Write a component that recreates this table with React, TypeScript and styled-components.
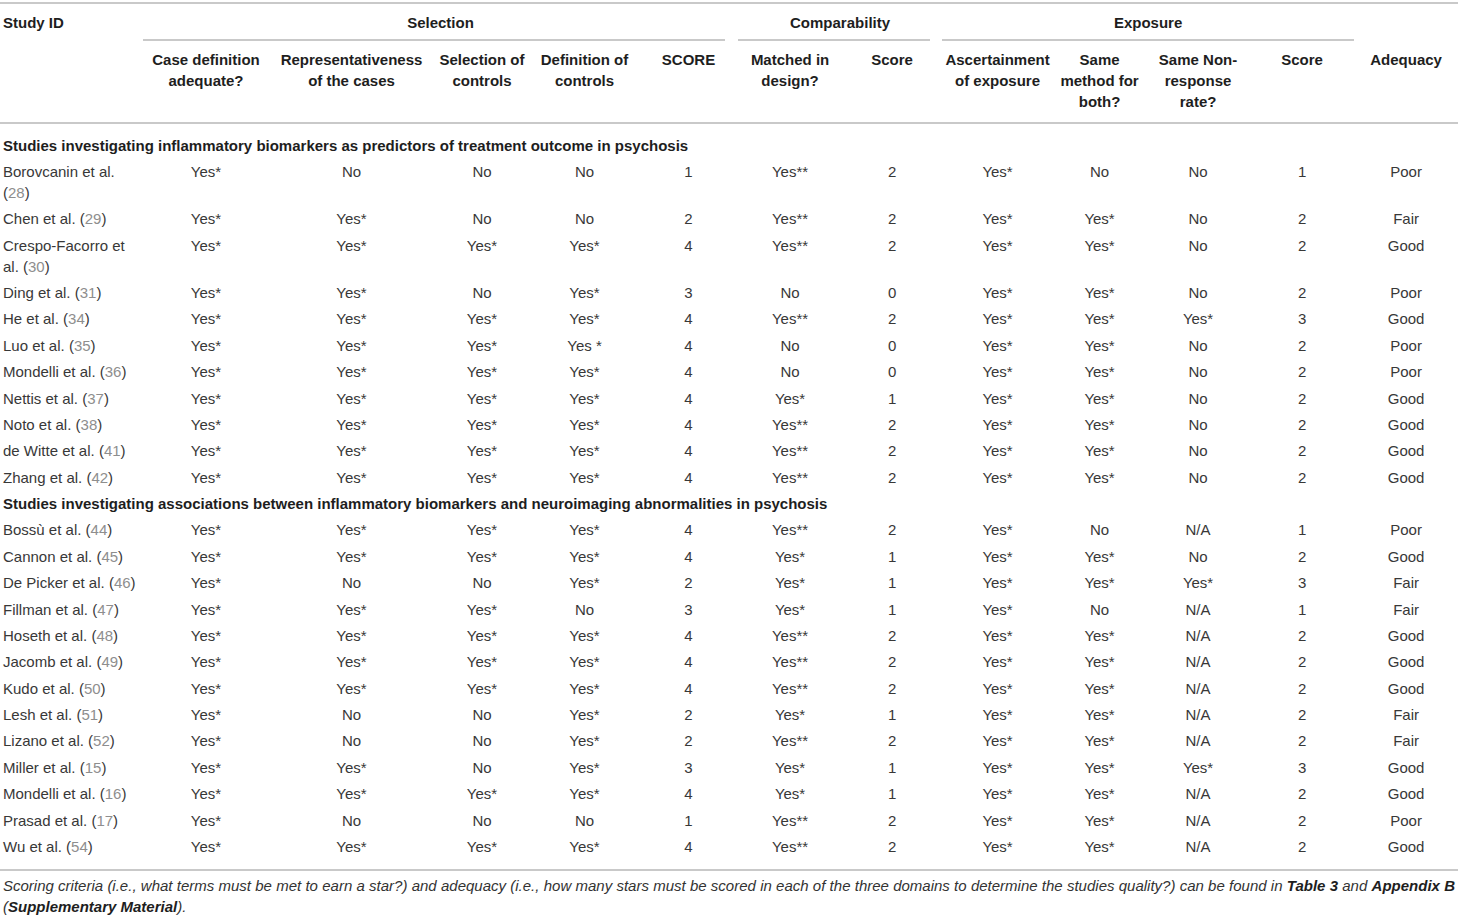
import React from "react";
import styled, { createGlobalStyle } from "styled-components";

const GlobalStyle = createGlobalStyle`
  html, body { margin: 0; padding: 0; background: #ffffff; }
  body { font-family: "Liberation Sans", Arial, Helvetica, sans-serif; color: #333; }
`;

const Page = styled.div`
  width: 1458px;
  padding-top: 2px;
`;

const Table = styled.table`
  width: 1458px;
  table-layout: fixed;
  border-collapse: collapse;
  border-spacing: 0;
  font-size: 15px;
  line-height: 21px;
  border-top: 2px solid #c9c9c9;
  border-bottom: 2px solid #c9c9c9;
`;

const Head = styled.thead`
  border-bottom: 2px solid #c9c9c9;
`;

const Th = styled.th<{ $left?: boolean; $top?: number; $bottom?: number }>`
  font-weight: 700;
  color: #1e1e1e;
  text-align: ${(p) => (p.$left ? "left" : "center")};
  vertical-align: top;
  padding: ${(p) => p.$top ?? 8}px 3px ${(p) => p.$bottom ?? 0}px;
`;

const GroupTh = styled.th`
  font-weight: 700;
  color: #1e1e1e;
  text-align: center;
  vertical-align: top;
  padding: 8px 0 0 0;
`;

const GroupLabel = styled.div<{ $gap: number }>`
  padding-bottom: 6px;
  border-bottom: 2px solid #c9c9c9;
  margin-right: ${(p) => p.$gap}px;
  & > span { display: inline-block; margin-right: -${(p) => p.$gap}px; }
`;

const Td = styled.td<{ $left?: boolean; $top?: number; $bottom?: number }>`
  text-align: ${(p) => (p.$left ? "left" : "center")};
  vertical-align: top;
  padding: ${(p) => p.$top ?? 2.7}px 3px ${(p) => p.$bottom ?? 2.7}px;
  color: #383838;
`;

const SectionTd = styled.td<{ $top?: number }>`
  font-weight: 700;
  color: #1e1e1e;
  text-align: left;
  padding: ${(p) => p.$top ?? 2.7}px 3px 2.7px;
  white-space: nowrap;
`;

const Cite = styled.span`
  color: #8e8e8e;
`;

const Footnote = styled.p`
  margin: 4px 0 0 0;
  padding: 0 3px;
  font-size: 15px;
  line-height: 21px;
  font-style: italic;
  text-align: justify;
  color: #333;
  & b { font-weight: 700; color: #1e1e1e; }
`;

type Row = [string, string, string[]];

const section1: Row[] = [
  ["Borovcanin et al.", "28", ["Yes*", "No", "No", "No", "1", "Yes**", "2", "Yes*", "No", "No", "1", "Poor"]],
  ["Chen et al.", "29", ["Yes*", "Yes*", "No", "No", "2", "Yes**", "2", "Yes*", "Yes*", "No", "2", "Fair"]],
  ["Crespo-Facorro et al.", "30", ["Yes*", "Yes*", "Yes*", "Yes*", "4", "Yes**", "2", "Yes*", "Yes*", "No", "2", "Good"]],
  ["Ding et al.", "31", ["Yes*", "Yes*", "No", "Yes*", "3", "No", "0", "Yes*", "Yes*", "No", "2", "Poor"]],
  ["He et al.", "34", ["Yes*", "Yes*", "Yes*", "Yes*", "4", "Yes**", "2", "Yes*", "Yes*", "Yes*", "3", "Good"]],
  ["Luo et al.", "35", ["Yes*", "Yes*", "Yes*", "Yes *", "4", "No", "0", "Yes*", "Yes*", "No", "2", "Poor"]],
  ["Mondelli et al.", "36", ["Yes*", "Yes*", "Yes*", "Yes*", "4", "No", "0", "Yes*", "Yes*", "No", "2", "Poor"]],
  ["Nettis et al.", "37", ["Yes*", "Yes*", "Yes*", "Yes*", "4", "Yes*", "1", "Yes*", "Yes*", "No", "2", "Good"]],
  ["Noto et al.", "38", ["Yes*", "Yes*", "Yes*", "Yes*", "4", "Yes**", "2", "Yes*", "Yes*", "No", "2", "Good"]],
  ["de Witte et al.", "41", ["Yes*", "Yes*", "Yes*", "Yes*", "4", "Yes**", "2", "Yes*", "Yes*", "No", "2", "Good"]],
  ["Zhang et al.", "42", ["Yes*", "Yes*", "Yes*", "Yes*", "4", "Yes**", "2", "Yes*", "Yes*", "No", "2", "Good"]],
];

const section2: Row[] = [
  ["Bossù et al.", "44", ["Yes*", "Yes*", "Yes*", "Yes*", "4", "Yes**", "2", "Yes*", "No", "N/A", "1", "Poor"]],
  ["Cannon et al.", "45", ["Yes*", "Yes*", "Yes*", "Yes*", "4", "Yes*", "1", "Yes*", "Yes*", "No", "2", "Good"]],
  ["De Picker et al.", "46", ["Yes*", "No", "No", "Yes*", "2", "Yes*", "1", "Yes*", "Yes*", "Yes*", "3", "Fair"]],
  ["Fillman et al.", "47", ["Yes*", "Yes*", "Yes*", "No", "3", "Yes*", "1", "Yes*", "No", "N/A", "1", "Fair"]],
  ["Hoseth et al.", "48", ["Yes*", "Yes*", "Yes*", "Yes*", "4", "Yes**", "2", "Yes*", "Yes*", "N/A", "2", "Good"]],
  ["Jacomb et al.", "49", ["Yes*", "Yes*", "Yes*", "Yes*", "4", "Yes**", "2", "Yes*", "Yes*", "N/A", "2", "Good"]],
  ["Kudo et al.", "50", ["Yes*", "Yes*", "Yes*", "Yes*", "4", "Yes**", "2", "Yes*", "Yes*", "N/A", "2", "Good"]],
  ["Lesh et al.", "51", ["Yes*", "No", "No", "Yes*", "2", "Yes*", "1", "Yes*", "Yes*", "N/A", "2", "Fair"]],
  ["Lizano et al.", "52", ["Yes*", "No", "No", "Yes*", "2", "Yes**", "2", "Yes*", "Yes*", "N/A", "2", "Fair"]],
  ["Miller et al.", "15", ["Yes*", "Yes*", "No", "Yes*", "3", "Yes*", "1", "Yes*", "Yes*", "Yes*", "3", "Good"]],
  ["Mondelli et al.", "16", ["Yes*", "Yes*", "Yes*", "Yes*", "4", "Yes*", "1", "Yes*", "Yes*", "N/A", "2", "Good"]],
  ["Prasad et al.", "17", ["Yes*", "No", "No", "No", "1", "Yes**", "2", "Yes*", "Yes*", "N/A", "2", "Poor"]],
  ["Wu et al.", "54", ["Yes*", "Yes*", "Yes*", "Yes*", "4", "Yes**", "2", "Yes*", "Yes*", "N/A", "2", "Good"]],
];

const widths = [143, 126, 165, 96, 109, 99, 104, 100, 111, 93, 104, 104, 104];

const subHeads = [
  "Case definition adequate?",
  "Representativeness of the cases",
  "Selection of controls",
  "Definition of controls",
  "SCORE",
  "Matched in design?",
  "Score",
  "Ascertainment of exposure",
  "Same method for both?",
  "Same Non-response rate?",
  "Score",
  "Adequacy",
];

const DataRow: React.FC<{ row: Row; last?: boolean }> = ({ row, last }) => (
  <tr>
    <Td $left $bottom={last ? 12.5 : undefined}>
      {row[0]} (<Cite>{row[1]}</Cite>)
    </Td>
    {row[2].map((v, i) => (
      <Td key={i} $bottom={last ? 12.5 : undefined}>
        {v}
      </Td>
    ))}
  </tr>
);

export default function App() {
  return (
    <Page>
      <GlobalStyle />
      <Table>
        <colgroup>
          {widths.map((w, i) => (
            <col key={i} style={{ width: w }} />
          ))}
        </colgroup>
        <Head>
          <tr>
            <Th $left rowSpan={2}>
              Study ID
            </Th>
            <GroupTh colSpan={5}>
              <GroupLabel $gap={13}>
                <span>Selection</span>
              </GroupLabel>
            </GroupTh>
            <GroupTh colSpan={2}>
              <GroupLabel $gap={12}>
                <span>Comparability</span>
              </GroupLabel>
            </GroupTh>
            <GroupTh colSpan={4}>
              <GroupLabel $gap={0}>
                <span>Exposure</span>
              </GroupLabel>
            </GroupTh>
            <Th />
          </tr>
          <tr>
            {subHeads.map((h, i) => (
              <Th key={i} $top={7.5} $bottom={10.5}>
                {h}
              </Th>
            ))}
          </tr>
        </Head>
        <tbody>
          <tr>
            <SectionTd colSpan={13} $top={10.5}>
              Studies investigating inflammatory biomarkers as predictors of treatment outcome in psychosis
            </SectionTd>
          </tr>
          {section1.map((r, i) => (
            <DataRow key={"a" + i} row={r} />
          ))}
          <tr>
            <SectionTd colSpan={13}>
              Studies investigating associations between inflammatory biomarkers and neuroimaging abnormalities in
              psychosis
            </SectionTd>
          </tr>
          {section2.map((r, i) => (
            <DataRow key={"b" + i} row={r} last={i === section2.length - 1} />
          ))}
        </tbody>
      </Table>
      <Footnote>
        Scoring criteria (i.e., what terms must be met to earn a star?) and adequacy (i.e., how many stars must be
        scored in each of the three domains to determine the studies quality?) can be found in <b>Table 3</b> and{" "}
        <b>Appendix B</b> (<b>Supplementary Material</b>).
      </Footnote>
    </Page>
  );
}
